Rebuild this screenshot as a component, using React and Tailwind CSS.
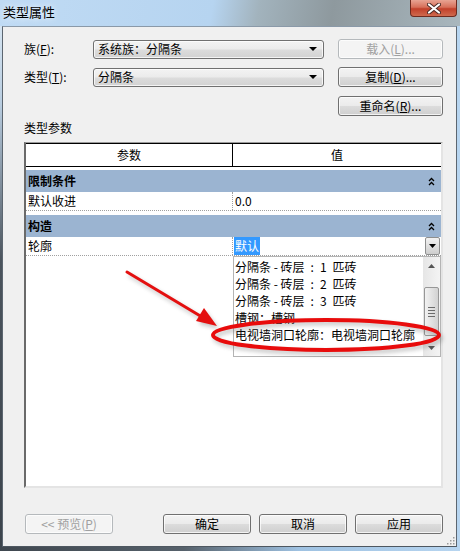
import React from "react";

const ComboArrow = () => (
  <svg width="8" height="4" viewBox="0 0 8 4">
    <path d="M0 0h8L4 4z" fill="#000" />
  </svg>
);

const Collapse = () => (
  <svg width="7" height="9" viewBox="0 0 7 9" fill="none" stroke="#000" strokeWidth="1.3">
    <path d="M1 4 3.5 1.5 6 4M1 8 3.5 5.5 6 8" />
  </svg>
);

function Btn({ children, disabled = false, className = "" }) {
  const tone = disabled
    ? "border-[#b5b9bc] bg-[#f4f4f4] text-[#a0a0a0]"
    : "border-[#707070] bg-[linear-gradient(#f3f3f3_0%,#ebebeb_48%,#dcdcdc_52%,#cfcfcf_100%)] text-black";
  return (
    <div
      className={`flex h-[20px] items-center justify-center rounded-[3px] border text-[12px] leading-none shadow-[inset_0_0_0_1px_rgba(255,255,255,0.75)] ${tone} ${className}`}
    >
      {children}
    </div>
  );
}

function Combo({ value }) {
  return (
    <div className="flex h-[19px] w-[231px] items-center justify-between rounded-[3px] border border-[#707070] bg-[linear-gradient(#f3f3f3_0%,#ebebeb_48%,#dcdcdc_52%,#d2d2d2_100%)] pl-[4px] pr-[6px] text-[12px] leading-none shadow-[inset_0_0_0_1px_rgba(255,255,255,0.75)]">
      <span>{value}</span>
      <ComboArrow />
    </div>
  );
}

const GroupRow = ({ title }) => (
  <div className="flex h-[22px] items-center justify-between bg-[#9bb4d1] pl-[2px] pr-[6px] text-[12px] font-bold">
    <span>{title}</span>
    <Collapse />
  </div>
);

// en spaces keep the gaps about as wide as the old bitmap font's
const listItems = [
  "分隔条 - 砖层\u2002:\u20021\u2002匹砖",
  "分隔条 - 砖层\u2002:\u20022\u2002匹砖",
  "分隔条 - 砖层\u2002:\u20023\u2002匹砖",
  "槽钢：槽钢",
  "电视墙洞口轮廓：电视墙洞口轮廓",
];

export default function App() {
  return (
    <div className="relative flex h-[551px] w-[460px] flex-col overflow-hidden bg-[#b7d5f0] font-['Noto_Sans_CJK_SC','Liberation_Sans',sans-serif] text-black">
      {/* ===== TITLE BAR ===== */}
      <div className="flex h-[26px] shrink-0 items-start justify-between bg-[linear-gradient(100deg,#c0dbf4_0%,#b6d4f0_46%,#a2b3bd_56%,#8e999e_72%,#a9b7be_100%)]">
        <span className="pl-[3px] pt-[3px] text-[13px] leading-[18px] [text-shadow:0_0_6px_#fff]">类型属性</span>
        <div className="mr-[3px] flex h-[17px] w-[47px] items-center justify-center rounded-b-[4px] border border-t-0 border-[#6e2a1e] bg-[linear-gradient(#e8a493_0%,#d7705a_45%,#c2402a_55%,#cf6a4e_100%)]">
          <svg width="14" height="11" viewBox="0 0 14 11">
            <path d="M2 1.5 12 9.5M12 1.5 2 9.5" stroke="#4a2a25" strokeWidth="4" strokeLinecap="round" />
            <path d="M2 1.5 12 9.5M12 1.5 2 9.5" stroke="#fff" strokeWidth="2.2" strokeLinecap="round" />
          </svg>
        </div>
      </div>

      {/* ===== WINDOW BODY ===== */}
      <div className="flex flex-1">
        <div className="w-[2px] bg-[linear-gradient(#d5e4f1_0%,#b9cde0_15%,#4b545d_45%,#3c444c_100%)]" />
        <div className="relative flex flex-1 flex-col border border-t-[#8a99a8] border-x-[#5c6670] border-b-[#4e5760] bg-[#f0f0f0]">
          <div className="ml-[21px] flex w-[419px] flex-col pt-[12px] text-[12px]">
            {/* Family / type rows */}
            <div className="flex h-[20px] items-center">
              <span className="w-[69px]">族(<u>F</u>):</span>
              <Combo value="系统族：分隔条" />
              <Btn disabled className="ml-auto w-[105px]">载入(<u>L</u>)...</Btn>
            </div>
            <div className="mt-[8px] flex h-[20px] items-center">
              <span className="w-[69px]">类型(<u>T</u>):</span>
              <Combo value="分隔条" />
              <Btn className="ml-auto w-[105px]">复制(<u>D</u>)...</Btn>
            </div>
            <div className="mt-[9px] flex h-[20px] justify-end">
              <Btn className="w-[105px]">重命名(<u>R</u>)...</Btn>
            </div>
            <div className="mt-[4px] h-[16px] leading-[16px]">类型参数</div>

            {/* ===== PARAMETER TABLE ===== */}
            <div className="relative mt-[6px] flex h-[346px] flex-col border-b-2 border-l-2 border-r-2 border-t border-b-[#e4e4e4] border-l-[#6a6a6a] border-r-[#e4e4e4] border-t-[#9a9a9a] bg-white">
              <div className="flex h-[24px] border-y border-black bg-white">
                <div className="flex w-[207px] items-center justify-center border-r border-black">参数</div>
                <div className="flex flex-1 items-center justify-center">值</div>
              </div>
              <div className="mt-[3px]">
                <GroupRow title="限制条件" />
              </div>
              <div className="flex h-[19px] items-center border-b border-dotted border-[#a0a0a0]">
                <div className="flex h-full w-[207px] items-center border-r border-dotted border-[#a0a0a0] pl-[2px]">默认收进</div>
                <div className="pl-[2px]">0.0</div>
              </div>
              <div className="mt-[4px]">
                <GroupRow title="构造" />
              </div>
              <div className="flex h-[19px] items-center border-b border-dotted border-[#a0a0a0]">
                <div className="flex h-full w-[207px] items-center border-r border-dotted border-[#a0a0a0] pl-[2px]">轮廓</div>
                <div className="flex flex-1 items-center justify-between pl-[1px] pr-[1px]">
                  <span className="bg-[#3399ff] px-[1px] text-white">默认</span>
                  <div className="flex h-[18px] w-[15px] items-center justify-center rounded-[2px] border border-[#8e8f8f] bg-[linear-gradient(#f2f2f2_0%,#e0e0e0_50%,#cdcdcd_100%)]">
                    <svg width="7" height="4" viewBox="0 0 7 4">
                      <path d="M0 0h7L3.5 4z" fill="#000" />
                    </svg>
                  </div>
                </div>
              </div>

              {/* Dropped-down list */}
              <div className="absolute left-[207px] top-[113px] flex h-[101px] w-[208px] border border-[#b4b4b4] bg-white">
                <div className="flex flex-1 flex-col pt-[1px]">
                  {listItems.map((item) => (
                    <div key={item} className="flex h-[17px] items-center whitespace-nowrap pl-[1px]">
                      {item}
                    </div>
                  ))}
                </div>
                <div className="flex w-[17px] flex-col items-center bg-[linear-gradient(90deg,#e6e6e6,#f4f4f4)]">
                  <div className="flex h-[17px] items-center justify-center">
                    <svg width="7" height="4" viewBox="0 0 7 4">
                      <path d="M0 4h7L3.5 0z" fill="#555" />
                    </svg>
                  </div>
                  <div className="mt-[13px] flex h-[49px] w-[15px] flex-col items-center justify-center gap-[2px] rounded-[2px] border border-[#979797] bg-[linear-gradient(90deg,#f2f2f2,#e2e2e2_50%,#d2d2d2)]">
                    <div className="h-px w-[7px] bg-[#6b6b6b]" />
                    <div className="h-px w-[7px] bg-[#6b6b6b]" />
                    <div className="h-px w-[7px] bg-[#6b6b6b]" />
                    <div className="h-px w-[7px] bg-[#6b6b6b]" />
                  </div>
                  <div className="flex-1" />
                  <div className="flex h-[17px] items-center justify-center">
                    <svg width="7" height="4" viewBox="0 0 7 4">
                      <path d="M0 0h7L3.5 4z" fill="#555" />
                    </svg>
                  </div>
                </div>
              </div>
            </div>

            {/* ===== BOTTOM BUTTONS ===== */}
            <div className="mt-[26px] flex h-[20px]">
              <Btn disabled className="ml-[1px] w-[88px]">&lt;&lt; 预览(<u>P</u>)</Btn>
              <div className="ml-auto flex gap-[8px]">
                <Btn className="w-[88px]">确定</Btn>
                <Btn className="w-[88px]">取消</Btn>
                <Btn className="w-[88px]">应用</Btn>
              </div>
            </div>
          </div>

          {/* resize grip */}
          <svg className="absolute bottom-[1px] right-[1px]" width="9" height="9" viewBox="0 0 9 9" fill="#9a9a9a">
            <rect x="7" y="1" width="1.5" height="1.5" />
            <rect x="4" y="4" width="1.5" height="1.5" />
            <rect x="7" y="4" width="1.5" height="1.5" />
            <rect x="1" y="7" width="1.5" height="1.5" />
            <rect x="4" y="7" width="1.5" height="1.5" />
            <rect x="7" y="7" width="1.5" height="1.5" />
          </svg>
        </div>
        <div className="w-[3px] bg-[#b7d5f0]" />
      </div>
      <div className="h-[4px] shrink-0 bg-[linear-gradient(90deg,#3f474f_0%,#56616b_40%,#9fc2e2_65%,#b7d5f0_100%)]" />

      {/* ===== RED ANNOTATION ===== */}
      <svg className="pointer-events-none absolute left-0 top-0" width="460" height="551" viewBox="0 0 460 551">
        <defs>
          <filter id="soft" x="-20%" y="-50%" width="140%" height="200%">
            <feGaussianBlur stdDeviation="2" />
          </filter>
        </defs>
        <g opacity="0.35" filter="url(#soft)" transform="translate(2 3)">
          <line x1="127" y1="272" x2="202" y2="317" stroke="#555" strokeWidth="3" />
          <polygon points="217,326 197,321 204,309" fill="#555" />
          <ellipse cx="326" cy="335" rx="113" ry="15" fill="none" stroke="#555" strokeWidth="4" />
        </g>
        <line x1="127" y1="272" x2="202" y2="317" stroke="#e41010" strokeWidth="3" strokeLinecap="round" />
        <polygon points="217,326 196,321 204,308" fill="#e41010" />
        <ellipse cx="326" cy="335" rx="113" ry="15" fill="none" stroke="#e80c0c" strokeWidth="4" />
      </svg>
    </div>
  );
}
